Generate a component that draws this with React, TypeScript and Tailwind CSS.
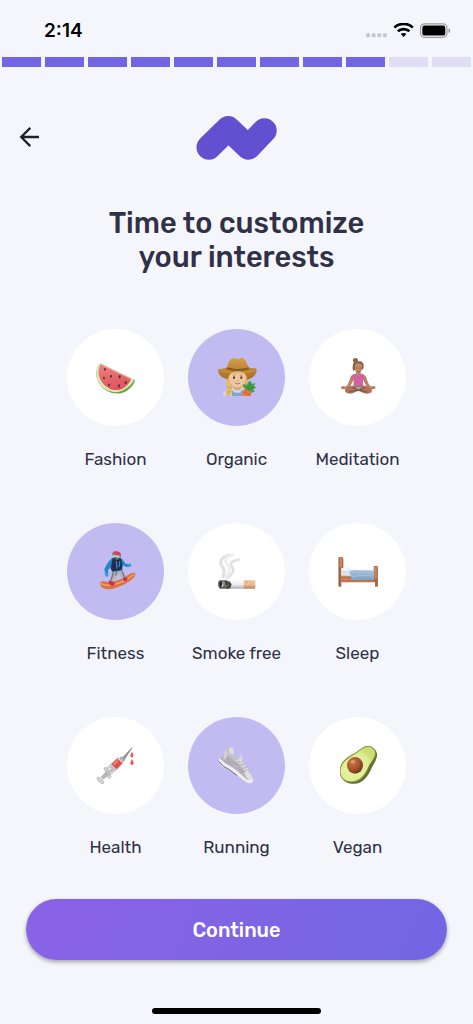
import { useState, type ReactNode } from "react";

function Watermelon() {
  return (
    <svg viewBox="-54 -63 291 291" className="size-full" aria-hidden="true">
      <defs>
        <linearGradient id="melon" x1="0" y1="0" x2="0.3" y2="1">
          <stop offset="0" stopColor="#ee8183" />
          <stop offset="1" stopColor="#e0555f" />
        </linearGradient>
      </defs>
      <path d="M46 40C31 54 29 84 46 106C65 131 101 138 126 122C139 114 148 102 150 91Z" fill="#6aa345" />
      <path d="M46 40C31 54 29 84 46 106C65 128 99 133 121 117C134 109 143 99 147 89Z" fill="#dbe8b6" />
      <path d="M47 43C38 58 38 80 52 98C70 121 98 126 116 114C128 107 135 97 138 87Z" fill="url(#melon)" />
      <path d="M47 43L138 87" stroke="#f3a3a0" strokeWidth="3" />
      <g fill="#6b3034">
        <ellipse cx="60" cy="58" rx="3" ry="4" transform="rotate(20 60 58)" />
        <ellipse cx="78" cy="79" rx="3" ry="4.5" transform="rotate(20 78 79)" />
        <ellipse cx="57" cy="84" rx="3" ry="4" transform="rotate(-20 57 84)" />
        <ellipse cx="104" cy="80" rx="3.5" ry="5" transform="rotate(25 104 80)" />
        <ellipse cx="72" cy="105" rx="3" ry="4" transform="rotate(-20 72 105)" />
        <ellipse cx="102" cy="108" rx="3.5" ry="5" transform="rotate(10 102 108)" />
        <ellipse cx="122" cy="98" rx="4" ry="4" />
      </g>
    </svg>
  );
}

function Farmer() {
  return (
    <svg viewBox="-51 -48 291 291" className="size-full" aria-hidden="true">
      <defs>
        <linearGradient id="hat" x1="0" y1="0" x2="0" y2="1">
          <stop offset="0" stopColor="#d5a04a" />
          <stop offset="1" stopColor="#a66f22" />
        </linearGradient>
      </defs>
      <path d="M64 82C60 100 66 116 70 132H120C130 116 132 98 128 80Z" fill="#dfb56d" />
      <path d="M54 153C54 139 64 130 80 128H112C126 130 134 138 136 153Z" fill="#cbdcf0" />
      <path d="M86 118H108V130C104 139 91 139 86 130Z" fill="#dda47e" />
      <path d="M71 84C70 108 80 127 97 127C114 127 124 108 122 84Z" fill="#f1c6a3" />
      <path d="M70 92C76 78 89 75 98 77C111 76 121 84 124 95L126 77L98 68L69 77Z" fill="#d5a554" />
      <path d="M84 91Q89 88 92 91M104 91Q109 88 113 91" stroke="#9d7340" strokeWidth="2" fill="none" />
      <ellipse cx="87" cy="98" rx="3.2" ry="4" fill="#574135" />
      <ellipse cx="109" cy="98" rx="3.2" ry="4" fill="#574135" />
      <path d="M95 107Q98 109 101 107" stroke="#c58765" strokeWidth="2" fill="none" />
      <path d="M90 114Q98 120 106 114" stroke="#bd6b60" strokeWidth="3" fill="none" />
      <path d="M66 102C58 119 71 124 64 138L61 153H78C84 137 79 121 73 112Z" fill="#e2bd72" />
      <path d="M66 125Q74 132 80 128M64 140Q71 144 78 139" stroke="#bb914d" strokeWidth="2" fill="none" />
      <path d="M81 153V136L91 143H105L112 132V153Z" fill="#83a5cd" />
      <path d="M39 77C38 70 51 74 66 67C71 48 77 39 89 40L98 43L109 38C121 39 125 53 131 67C143 73 155 65 155 75C155 91 140 101 127 104C125 86 113 79 98 79C83 79 72 87 69 102C55 101 41 92 39 77Z" fill="url(#hat)" />
      <path d="M66 67Q98 77 131 67L132 73Q98 84 65 73Z" fill="#8c571c" />
      <path d="M45 76Q98 92 149 76" stroke="#dda84f" strokeWidth="3" fill="none" opacity=".55" />
      <path d="M112 153C110 139 115 131 124 130C134 130 141 140 137 153Z" fill="#e9783e" />
      <path d="M115 143H125M122 136H134M126 148H137" stroke="#c84f22" strokeWidth="2" />
      <path d="M121 132L113 123L117 117L126 120L129 111L137 108L142 117L151 113L148 123L153 128L145 133L149 140L138 144L131 134Z" fill="#43a34a" />
      <path d="M126 131L137 118M130 133L145 126" stroke="#237737" strokeWidth="3" />
    </svg>
  );
}

function Meditation() {
  return (
    <svg viewBox="-57 -57 291 291" className="size-full" aria-hidden="true">
      <path d="M78 43C72 40 74 31 82 30C89 30 92 36 89 41C100 36 109 44 107 58L104 65H80L76 70C72 62 74 49 78 43Z" fill="#8d6048" />
      <path d="M86 68H97V80H86Z" fill="#ad7256" />
      <path d="M81 51C85 44 97 43 102 52V63C100 73 95 78 91 78C86 77 80 69 81 59Z" fill="#c18a69" />
      <path d="M84 60H89M95 60H100M88 70Q92 73 96 70" stroke="#76483a" strokeWidth="2" fill="none" />
      <path d="M77 80C69 80 67 86 65 95L59 110L47 120L52 125L66 116L77 95M104 80C113 80 115 87 117 95L123 110L135 120L131 125L116 116L105 95" fill="#bd8060" />
      <path d="M77 78L84 77Q91 91 98 77L105 78L110 85L105 98L106 118H76L77 98L72 85Z" fill="#cf62a4" />
      <path d="M83 77Q91 92 99 77L95 75H87Z" fill="#bd8060" />
      <path d="M76 113H106C116 112 130 120 132 128C131 136 118 139 108 136L91 128L74 136C62 140 50 134 51 127C54 119 66 112 76 113Z" fill="#af7458" />
      <path d="M73 118L91 128L110 118M64 132L91 126L118 133" stroke="#7e4f3e" strokeWidth="3" fill="none" />
      <path d="M84 117H101L91 125Z" fill="#79b0d1" />
      <ellipse cx="46" cy="119" rx="8" ry="5" fill="#c88c69" />
      <ellipse cx="135" cy="119" rx="8" ry="5" fill="#c88c69" />
      <path d="M42 117L52 122M139 117L129 122" stroke="#945f49" strokeWidth="2" />
    </svg>
  );
}

function Snowboarder() {
  return (
    <svg viewBox="-63 -60 291 291" className="size-full" aria-hidden="true">
      <path d="M37 124C34 115 43 113 52 116C75 122 100 108 119 97C130 87 143 87 142 94C140 109 114 124 83 135C62 142 38 139 37 124Z" fill="#d8743d" />
      <path d="M38 121C59 136 110 119 138 94" stroke="#f6a35e" strokeWidth="4" fill="none" />
      <path d="M70 82L99 78L113 95L117 108L106 114L96 98L87 97L78 119L65 114Z" fill="#b8b5c0" />
      <path d="M77 86L69 113M102 85L110 105M87 84L82 98" stroke="#77717e" strokeWidth="4" />
      <path d="M62 112L80 117L80 125L72 129L62 122ZM104 106L114 101L119 108L115 114L107 114Z" fill="#c92f58" />
      <path d="M73 44L61 57L49 78L53 96L61 93L60 80L70 73L72 87L103 83L105 67L117 73L126 70L124 63L113 62L102 47Z" fill="#2386c8" />
      <path d="M74 46L68 78L74 85L100 81L103 63L98 46Z" fill="#242c48" />
      <path d="M85 54L87 77M95 55L94 72" stroke="#397ed5" strokeWidth="4" />
      <path d="M49 89L58 87L62 99L54 102ZM117 65L128 61L130 70L120 73Z" fill="#2e9fe0" />
      <path d="M75 35H97V46L88 52L79 48Z" fill="#655d72" />
      <path d="M73 37C72 25 80 24 86 25C95 25 101 31 98 43Z" fill="#d93d66" />
      <path d="M74 34L97 38L95 45L77 42Z" fill="#51ccc5" />
      <path d="M75 39L93 42" stroke="#d2f19b" strokeWidth="3" />
    </svg>
  );
}

function Cigarette() {
  return (
    <svg viewBox="-60 -60 291 291" className="size-full" aria-hidden="true">
      <defs>
        <linearGradient id="paper" x1="0" y1="0" x2="0" y2="1">
          <stop offset="0" stopColor="#fcfcfc" />
          <stop offset=".5" stopColor="#eeeef0" />
          <stop offset="1" stopColor="#aaaab0" />
        </linearGradient>
        <linearGradient id="filter" x1="0" y1="0" x2="0" y2="1">
          <stop offset="0" stopColor="#efc39a" />
          <stop offset=".5" stopColor="#edbd93" />
          <stop offset="1" stopColor="#b6855f" />
        </linearGradient>
        <filter id="smoke"><feGaussianBlur stdDeviation="2" /></filter>
      </defs>
      <g filter="url(#smoke)" fill="none" strokeLinecap="round">
        <path d="M64 36C37 42 33 59 44 72C54 84 45 92 46 101" stroke="#e1e1e2" strokeWidth="9" />
        <path d="M92 50C67 54 64 66 75 76C79 86 68 98 57 105" stroke="#e1e1e2" strokeWidth="8" />
        <path d="M74 35C49 43 48 57 60 66C69 75 65 89 54 99" stroke="#eeeeee" strokeWidth="8" />
      </g>
      <rect x="60" y="112" width="48" height="25" fill="url(#paper)" />
      <path d="M107 112H141Q144 124 141 137H107Z" fill="url(#filter)" />
      <path d="M35 112C28 116 29 133 36 137H65L70 130L66 118L55 112Z" fill="#5f5b58" />
      <path d="M34 118L39 115L43 123L37 134Z" fill="#252527" />
      <path d="M44 116L50 118L46 130L41 133" fill="#d7d1c8" />
      <path d="M52 114L58 121L53 128L60 136M62 116L68 124L61 134" stroke="#453e39" strokeWidth="5" fill="none" />
      <path d="M45 120L56 132" stroke="#8a7c6b" strokeWidth="5" />
      <g fill="#c99065">
        <circle cx="117" cy="118" r="1.5" /><circle cx="129" cy="122" r="1.5" />
        <circle cx="120" cy="130" r="1.5" /><circle cx="136" cy="131" r="1.5" />
      </g>
    </svg>
  );
}

function Bed() {
  return (
    <svg viewBox="-57 -60 291 291" className="size-full" aria-hidden="true">
      <defs>
        <linearGradient id="quilt" x1="0" y1="0" x2="0" y2="1">
          <stop offset="0" stopColor="#a9c3df" />
          <stop offset="1" stopColor="#7ca0c5" />
        </linearGradient>
      </defs>
      <path d="M32 42H43L46 47V75H40V131H32Z" fill="#a66a48" />
      <path d="M34 43H42V73H34Z" fill="#cb8a63" />
      <path d="M39 97H142V118H39Z" fill="#ba7650" />
      <path d="M40 99H139M40 109H138" stroke="#d39066" strokeWidth="3" />
      <path d="M138 69H149V131H141V117H137V73Z" fill="#a7694a" />
      <path d="M139 71H147V108H140Z" fill="#c68763" />
      <path d="M40 82C60 77 76 80 88 82V98H40Z" fill="#d8e5f1" />
      <path d="M41 76C47 72 64 71 70 77C72 86 61 88 51 86H41Z" fill="#f3f4f7" />
      <path d="M41 85Q59 88 69 81" stroke="#bbc3cf" strokeWidth="2" fill="none" />
      <path d="M63 87C74 80 84 80 96 82H133L138 87V111H70V99Z" fill="url(#quilt)" />
      <path d="M70 101Q103 94 137 99" stroke="#a4bfda" strokeWidth="3" fill="none" />
      <path d="M33 46V129M148 74V129" stroke="#86543d" strokeWidth="2" />
    </svg>
  );
}

function Syringe() {
  return (
    <svg viewBox="-54 -54 291 291" className="size-full" aria-hidden="true">
      <path d="M112 69L141 38L117 75Z" fill="#9a9a9d" stroke="#77777b" strokeWidth="2" />
      <path d="M102 72L110 65L119 75L110 84Z" fill="#b8b8bd" stroke="#89898e" strokeWidth="2" />
      <path d="M60 104L97 68Q102 67 108 74L114 81Q114 85 109 90L76 120Z" fill="#dededf" stroke="#aaaaae" strokeWidth="2" />
      <path d="M79 88L97 71L112 84L95 103Z" fill="#df4e47" />
      <path d="M86 89L99 77" stroke="#fa9285" strokeWidth="4" />
      <path d="M64 105L81 89L92 101L76 115Z" fill="#bebec3" />
      <path d="M70 105L77 99" stroke="#f4f4f4" strokeWidth="4" />
      <path d="M57 100L63 97L78 125L72 131Z" fill="#d8d8dc" stroke="#a3a3a8" strokeWidth="2" />
      <path d="M64 110L49 125L55 133L71 119Z" fill="#b8b8bc" stroke="#929297" strokeWidth="1.5" />
      <path d="M36 129C40 123 46 129 51 134L56 141C57 148 51 148 46 143L38 136Z" fill="#d5d5d8" stroke="#a2a2a6" strokeWidth="2" />
      <path d="M141 50C143 56 147 60 144 65C141 69 135 65 136 60Z" fill="#df4841" />
      <path d="M141 73C144 79 148 83 144 88C140 92 134 88 137 82Z" fill="#df4841" />
      <path d="M140 58V63M140 81V86" stroke="#ff8c7d" strokeWidth="2" />
    </svg>
  );
}

function Sneaker() {
  return (
    <svg viewBox="-60 -54 291 291" className="size-full" aria-hidden="true">
      <path d="M35 72C34 81 43 90 54 97C79 109 93 124 113 140C121 146 134 147 137 135C137 127 130 120 123 113L104 75L95 76L78 63L76 37L65 35L53 45L48 60Z" fill="#c2bdc6" />
      <path d="M33 73L35 70L54 86C83 100 103 123 118 135L136 133C137 143 126 149 115 142C96 128 82 115 61 104L42 95Q33 85 33 73Z" fill="#efedf1" />
      <path d="M34 80L46 94L64 104L88 122" stroke="#686575" strokeWidth="3" fill="none" />
      <path d="M38 71L52 50L65 69L88 78L94 91L115 114L111 126L85 102L52 84Z" fill="#b0abb5" />
      <path d="M48 55L53 44L59 52L56 69L45 77Z" fill="#d0ccd4" />
      <path d="M62 40L71 36L76 38L78 62L65 58Z" fill="#dfdce3" />
      <path d="M67 53L84 65L97 75L105 74L121 111L106 105L91 87L75 76Z" fill="#c4c0c9" />
      <path d="M90 75L101 55L105 75L98 81Z" fill="#d9d5dd" />
      <path d="M107 115L118 105L132 123L136 134L124 136Z" fill="#dfdce2" />
      <path d="M84 76L99 75M93 86L107 82M99 96L114 91M106 105L120 100" stroke="#e4e1e7" strokeWidth="3" />
      <path d="M75 86L81 97M84 91L91 104" stroke="#c3bec9" strokeWidth="3" />
    </svg>
  );
}

function Avocado() {
  return (
    <svg viewBox="-57 -54 291 291" className="size-full" aria-hidden="true">
      <defs>
        <radialGradient id="flesh" cx=".4" cy=".6" r=".6">
          <stop offset="0" stopColor="#eff1a2" />
          <stop offset=".7" stopColor="#e0ed98" />
          <stop offset="1" stopColor="#c9dd70" />
        </radialGradient>
        <radialGradient id="pit" cx=".35" cy=".3" r=".75">
          <stop offset="0" stopColor="#cc7c48" />
          <stop offset=".6" stopColor="#a3542a" />
          <stop offset="1" stopColor="#69341c" />
        </radialGradient>
      </defs>
      <path d="M110 35C124 29 145 39 147 57C148 73 137 86 131 99C120 126 101 149 74 146C48 145 34 128 36 105C37 79 60 66 77 57C90 50 98 39 110 35Z" fill="#646e36" />
      <path d="M108 35C121 29 141 36 143 53C144 70 130 81 123 95C113 122 95 143 70 142C46 141 34 126 36 105C37 80 58 66 75 57C89 50 97 39 108 35Z" fill="#8ba43b" />
      <path d="M109 38C122 33 140 38 141 54C141 69 128 80 121 94C111 120 93 140 69 139C47 138 36 124 38 105C40 83 60 70 77 60C90 53 98 42 109 38Z" fill="url(#flesh)" />
      <ellipse cx="81" cy="91" rx="24" ry="25" fill="url(#pit)" />
      <ellipse cx="75" cy="80" rx="7" ry="5" fill="#eeb086" opacity=".65" />
    </svg>
  );
}

const interests: { name: string; art: ReactNode }[] = [
  { name: "Fashion", art: <Watermelon /> },
  { name: "Organic", art: <Farmer /> },
  { name: "Meditation", art: <Meditation /> },
  { name: "Fitness", art: <Snowboarder /> },
  { name: "Smoke free", art: <Cigarette /> },
  { name: "Sleep", art: <Bed /> },
  { name: "Health", art: <Syringe /> },
  { name: "Running", art: <Sneaker /> },
  { name: "Vegan", art: <Avocado /> },
];

function StatusBar() {
  return (
    <div className="flex h-[57px] items-center justify-between pt-1 pr-[22px] pl-11">
      <time className="font-['Inter',sans-serif] text-[19px] leading-6 font-semibold text-black">2:14</time>
      <svg width="86" height="16" viewBox="0 0 86 16" aria-hidden="true">
        <g fill="#c6c7cb">
          <rect x="1" y="10.2" width="4" height="4" rx="1.3" />
          <rect x="6.7" y="10.2" width="4" height="4" rx="1.3" />
          <rect x="12.3" y="10.2" width="4" height="4" rx="1.3" />
          <rect x="18" y="10.2" width="4" height="4" rx="1.3" />
        </g>
        <g fill="none" stroke="#000" strokeWidth="2.7">
          <path d="M29.4 4.6C34.3-.3 42.9-.3 47.8 4.6" />
          <path d="M32.8 8.3C35.9 5.4 41.3 5.4 44.4 8.3" />
        </g>
        <path d="M35.8 11C37.2 9.7 40 9.7 41.4 11L38.6 13.9Z" />
        <rect x="55.5" y=".8" width="26.5" height="13.5" rx="4" fill="none" stroke="#9b9ca0" strokeWidth="1.2" />
        <rect x="57.3" y="2.6" width="23" height="10" rx="2.2" />
        <path d="M83.5 5.3C85.8 5.8 85.8 9.5 83.5 10Z" fill="#96979b" />
      </svg>
    </div>
  );
}

export default function App() {
  const [selected, setSelected] = useState(["Organic", "Fitness", "Running"]);
  const toggle = (name: string) =>
    setSelected((current) =>
      current.includes(name) ? current.filter((item) => item !== name) : [...current, name],
    );

  return (
    <main className="flex min-h-screen flex-col bg-[#f4f6fb] font-['Rubik','Roboto',sans-serif] text-[#303047]">
      <StatusBar />
      <div className="flex gap-1 px-0.5" role="progressbar" aria-label="Setup progress" aria-valuemin={0} aria-valuemax={11} aria-valuenow={9}>
        {Array.from({ length: 11 }, (_, step) => (
          <span key={step} className={step < 9 ? "h-2.5 flex-1 bg-[#7165e3]" : "h-2.5 flex-1 bg-[#e1ddf5]"} />
        ))}
      </div>

      <header className="mt-12 grid grid-cols-[1fr_auto_1fr] items-center px-[17px]">
        <button type="button" aria-label="Back" className="size-6 cursor-pointer">
          <svg width="24" height="24" viewBox="0 0 24 24" fill="none" stroke="#202124" strokeWidth="2.3" aria-hidden="true">
            <path d="M22 11H4M13.3 1.9L4.2 11L13.3 20.1" />
          </svg>
        </button>
        <svg width="82" height="46" viewBox="0 0 82 46" aria-label="Logo" role="img">
          <path d="M12.8 32.4L32.2 13.4L52.3 32.4L68.4 15.6" fill="none" stroke="#6250d1" strokeWidth="24.6" strokeLinecap="round" strokeLinejoin="round" />
        </svg>
      </header>

      <h1 className="mt-[45px] text-center text-[29px] leading-[34px] font-medium">
        Time to customize
        <br />
        your interests
      </h1>

      <div className="mt-[55px] grid grid-cols-[repeat(3,97px)] justify-center gap-x-6 gap-y-[50px]">
        {interests.map(({ name, art }) => (
          <button
            key={name}
            type="button"
            aria-pressed={selected.includes(name)}
            onClick={() => toggle(name)}
            className="flex cursor-pointer flex-col items-center gap-5"
          >
            <span className={selected.includes(name) ? "size-[97px] rounded-full bg-[#c1bbf1]" : "size-[97px] rounded-full bg-white"}>
              {art}
            </span>
            <span className="text-[17px] leading-[27px] whitespace-nowrap">{name}</span>
          </button>
        ))}
      </div>

      <div className="mt-[38px] px-[26px]">
        <button
          type="button"
          className="h-[61px] w-full cursor-pointer rounded-full bg-linear-115 from-[#8b62e5] to-[#7166e3] text-xl font-medium text-white shadow-[0_2px_4px_rgba(0,0,0,0.35)]"
        >
          Continue
        </button>
      </div>
      <div className="mx-auto mt-auto mb-2.5 h-1.5 w-[169px] rounded-full bg-black" />
    </main>
  );
}
